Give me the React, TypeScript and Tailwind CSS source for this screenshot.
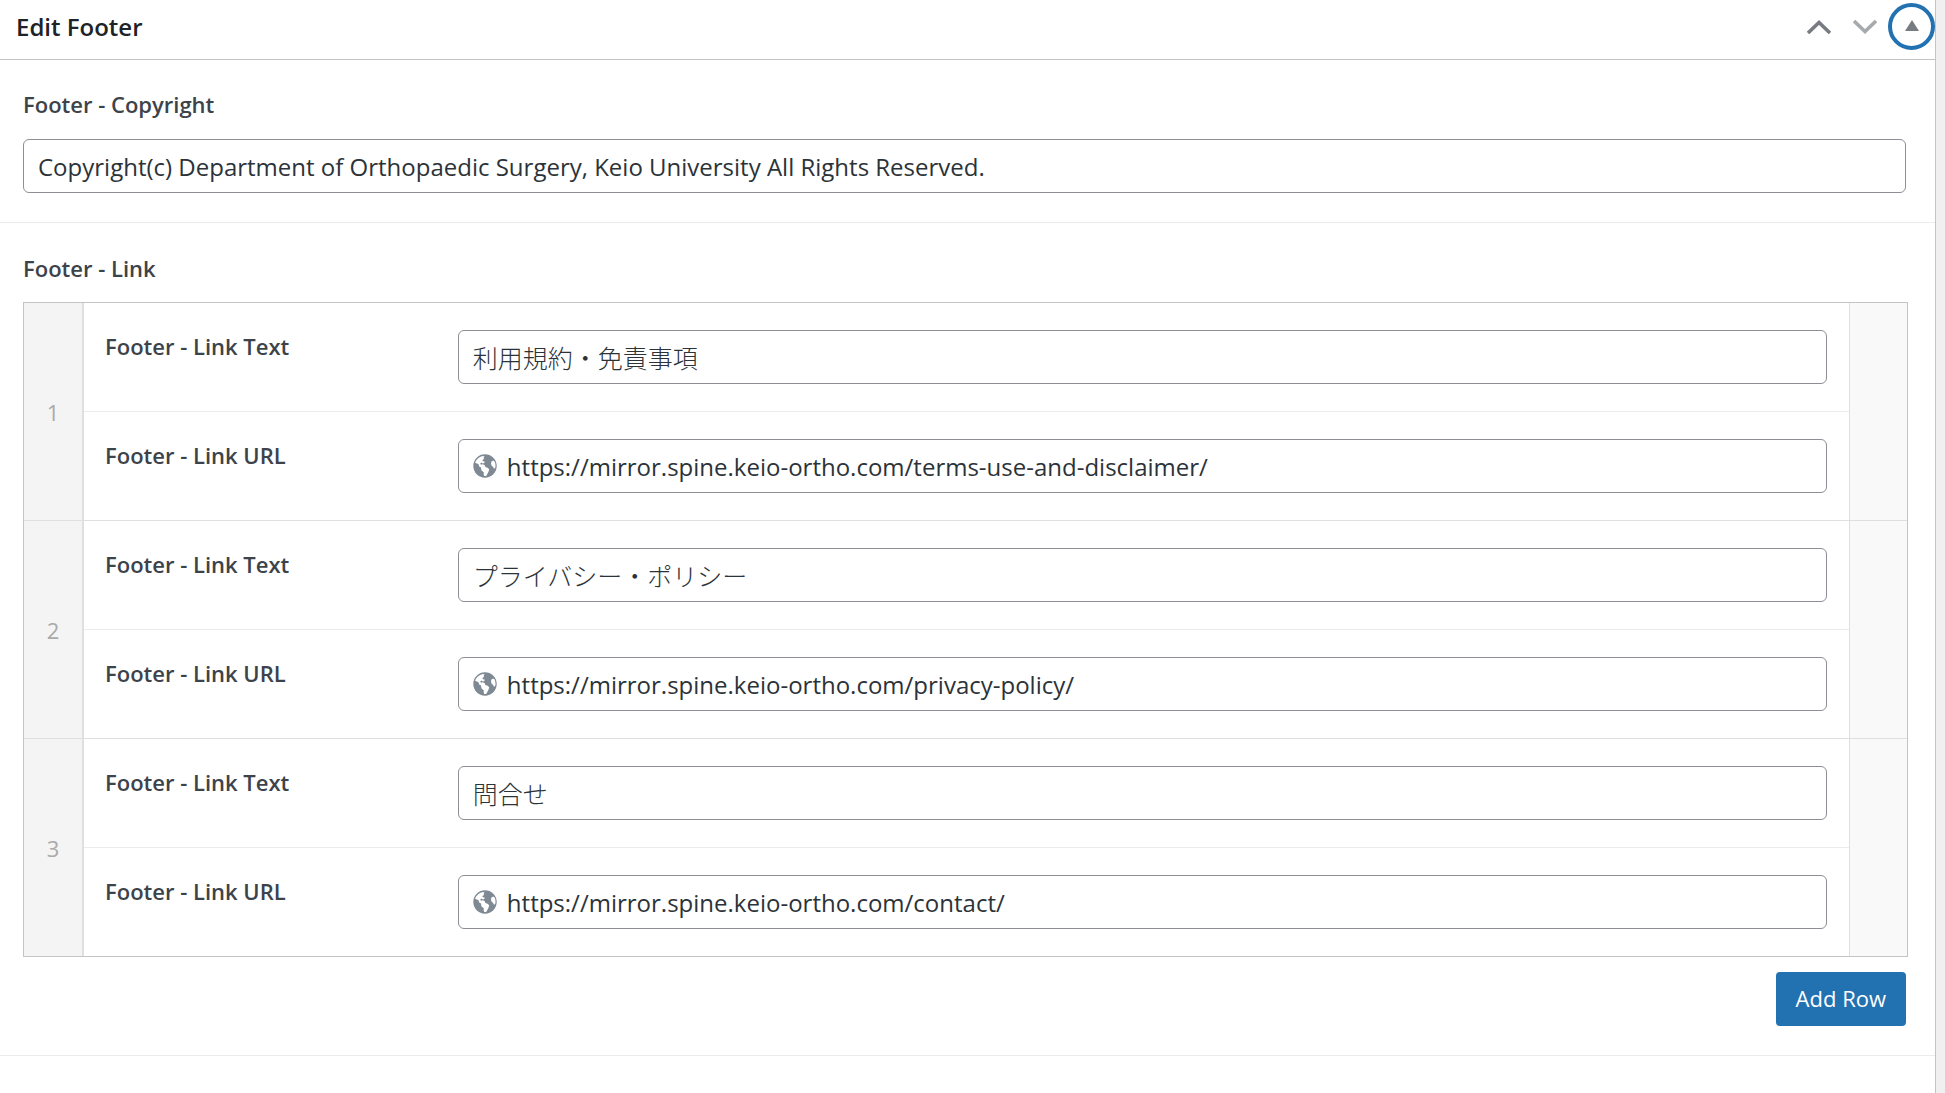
import React from "react";

type LinkRow = { text: string; url: string };

const rows: LinkRow[] = [
  { text: "利用規約・免責事項", url: "https://mirror.spine.keio-ortho.com/terms-use-and-disclaimer/" },
  { text: "プライバシー・ポリシー", url: "https://mirror.spine.keio-ortho.com/privacy-policy/" },
  { text: "問合せ", url: "https://mirror.spine.keio-ortho.com/contact/" },
];

const inputClass =
  "block h-[54px] w-full rounded-md border border-[#8c8f94] bg-white pr-3.5 text-[#2c3338] outline-none";

const labelClass = "block text-[22px] leading-7 font-semibold text-[#3c434a]";

function Globe() {
  return (
    <svg viewBox="0 0 24 24" className="pointer-events-none absolute top-[15px] left-[15px] size-6" aria-hidden="true">
      <circle cx="12" cy="12" r="11.7" fill="#7e8993" />
      <path
        fill="#fff"
        d="M2 8.400C3.400 5.200 6.400 2.600 10 1.900L11.600 2.400 10.400 4 11.200 4.800 9.300 6.300 10 7.200 11.600 7.600 11.400 9 9.600 9.400 8.600 8.600 7.200 9.600 8 10.800 9.800 10.200 11.600 11 12.400 13 14.600 13.800 16.200 15.200 15.600 17.600 14.600 19.600 13.200 22 11.200 22 10.600 20 10.900 18.400 8.400 16.200 8 13.600 6.200 12.400 5.400 10 3.600 9.400Z"
      />
      <path fill="#fff" d="M18.400 7.600L20.200 6.600 21.600 7.400C22.600 9.400 22.800 12 22.200 14L21 14.800 20 12.800 18.600 11.800 18 9.600Z" />
    </svg>
  );
}

function FieldRow({ id, label, children }: { id: string; label: string; children: React.ReactNode }) {
  return (
    <div className="flex border-t border-[#eaecee] pr-[22px] first:border-t-0">
      <div className="w-[21.45%] shrink-0 pt-[29px] pl-[21px]">
        <label htmlFor={id} className={labelClass}>
          {label}
        </label>
      </div>
      <div className="relative my-[27px] min-w-0 flex-1">{children}</div>
    </div>
  );
}

export default function App() {
  return (
    <div className="flex h-screen overflow-hidden bg-[#f0f0f1] font-['Open_Sans','Noto_Sans_CJK_JP',sans-serif]">
      <main className="mr-[9px] min-w-0 flex-1 border-r border-[#c3c4c7] bg-white">
        <header className="flex h-15 items-center justify-between border-b border-[#c3c4c7] pb-1.5 pl-4">
          <h2 className="text-2xl font-semibold text-[#1d2327]">Edit Footer</h2>
          <div className="flex items-center">
            <button type="button" aria-label="Move up" className="flex h-12 w-[46px] items-center justify-center">
              <svg viewBox="0 0 24 14" className="h-3.5 w-6" fill="none" stroke="#787c82" strokeWidth="3.6">
                <path d="M1 13L12 2.500L23 13" />
              </svg>
            </button>
            <button type="button" aria-label="Move down" className="flex h-12 w-[46px] items-center justify-center">
              <svg viewBox="0 0 24 14" className="h-3.5 w-6" fill="none" stroke="#a7aaad" strokeWidth="3.6">
                <path d="M1 1L12 11.500L23 1" />
              </svg>
            </button>
            <button
              type="button"
              aria-label="Toggle panel: Edit Footer"
              className="flex size-[47px] items-center justify-center rounded-full border-4 border-[#2271b1] pb-0.5"
            >
              <svg viewBox="0 0 14 11" className="h-[11px] w-3.5" fill="#787c82">
                <path d="M7 0L14 11H0Z" />
              </svg>
            </button>
          </div>
        </header>

        <section className="border-b border-[#eaecee] pt-[30px] pr-[29px] pb-[29px] pl-[23px]">
          <label htmlFor="copyright" className={labelClass}>
            Footer - Copyright
          </label>
          <input
            id="copyright"
            type="text"
            className={inputClass + " mt-[21px] pl-3.5 text-2xl"}
            defaultValue="Copyright(c) Department of Orthopaedic Surgery, Keio University All Rights Reserved."
          />
        </section>

        <section className="border-b border-[#eaecee] pt-[31px] pr-[29px] pb-[29px] pl-[23px]">
          <h3 className={labelClass}>Footer - Link</h3>
          <div className="mt-5 -mr-0.5 border border-[#c3c4c7]">
            {rows.map((row, i) => (
              <div key={i} className="flex border-t border-[#dfdfdf] first:border-t-0">
                <div className="flex w-15 shrink-0 items-center justify-center border-r-2 border-[#dfdfdf] bg-[#f4f4f4] pt-0.5 text-[22px] text-[#aaaaaa]">
                  {i + 1}
                </div>
                <div className="min-w-0 flex-1">
                  <FieldRow id={"text-" + i} label="Footer - Link Text">
                    <input
                      id={"text-" + i}
                      type="text"
                      className={inputClass + " pl-3.5 text-[25px] font-light"}
                      defaultValue={row.text}
                    />
                  </FieldRow>
                  <FieldRow id={"url-" + i} label="Footer - Link URL">
                    <Globe />
                    <input
                      id={"url-" + i}
                      type="url"
                      className={inputClass + " pl-12 text-2xl"}
                      defaultValue={row.url}
                    />
                  </FieldRow>
                </div>
                <div className="w-[58px] shrink-0 border-l border-[#dfdfdf] bg-[#f9f9f9]" />
              </div>
            ))}
          </div>
          <div className="mt-[15px] flex justify-end">
            <button type="button" className="h-[54px] rounded bg-[#2271b1] px-5 pb-0.5 text-[22px] text-white">
              Add Row
            </button>
          </div>
        </section>

        <section className="pt-[30px] pr-[29px] pl-[23px]">
          <h3 className={labelClass}>X (Social Settings)</h3>
        </section>
      </main>
    </div>
  );
}
